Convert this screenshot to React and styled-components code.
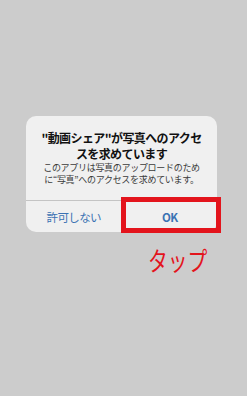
import React from "react";
import styled, { createGlobalStyle } from "styled-components";

const Global = createGlobalStyle`
  html, body {
    margin: 0;
    padding: 0;
    background: #cccccc;
  }
  body {
    font-family: "Noto Sans CJK JP", "Noto Sans", sans-serif;
  }
`;

const Page = styled.div`
  width: 247px;
  height: 396px;
  background: #cccccc;
  padding-top: 116px;
  box-sizing: border-box;
  display: flex;
  flex-direction: column;
  align-items: flex-start;
`;

const Column = styled.div`
  margin-left: 26px;
  width: 191px;
  display: flex;
  flex-direction: column;
`;

const Dialog = styled.div`
  background: #f0f0f0;
  border-radius: 10px;
  display: flex;
  flex-direction: column;
  position: relative;
`;

const Message = styled.div`
  padding: 14px 8px 14px;
  text-align: center;
  border-bottom: 1px solid #c4c4c4;
`;

const Title = styled.div`
  font-size: 12px;
  line-height: 16px;
  font-weight: 700;
  color: #111;
  letter-spacing: -0.6px;
  white-space: nowrap;
`;

const Body = styled.div`
  font-size: 9px;
  line-height: 12px;
  color: #3a3a3a;
  letter-spacing: -0.3px;
  white-space: nowrap;
`;

const Actions = styled.div`
  display: grid;
  grid-template-columns: 1fr 1fr;
  height: 31px;
`;

const Action = styled.div`
  position: relative;
  display: flex;
  align-items: center;
  justify-content: center;
  font-size: 11.5px;
  letter-spacing: -0.6px;
  color: #3b72b3;
  font-weight: ${(p) => (p.$bold ? 700 : 400)};
  border-left: ${(p) => (p.$divider ? "1px solid #c4c4c4" : "none")};
`;

const Highlight = styled.div`
  position: absolute;
  top: -4px;
  left: -2px;
  right: -4px;
  bottom: -1px;
  border: 5px solid #e3141c;
  box-sizing: border-box;
  pointer-events: none;
`;

const TapLabel = styled.div`
  margin-top: 13px;
  padding-left: 122px;
  height: 30px;
  line-height: 30px;
  font-size: 26px;
  color: #e3141c;
  font-weight: 400;
  white-space: nowrap;
  transform: scaleX(0.76);
  transform-origin: 122px 50%;
`;

export default function App() {
  return (
    <>
      <Global />
      <Page>
        <Column>
          <Dialog>
            <Message>
              <Title>
                "動画シェア"が写真へのアクセ
                <br />
                スを求めています
              </Title>
              <Body>
                このアプリは写真のアップロードのため
                <br />
                に“写真”へのアクセスを求めています。
              </Body>
            </Message>
            <Actions>
              <Action>許可しない</Action>
              <Action $bold $divider>
                OK
                <Highlight />
              </Action>
            </Actions>
          </Dialog>
          <TapLabel>タップ</TapLabel>
        </Column>
      </Page>
    </>
  );
}
